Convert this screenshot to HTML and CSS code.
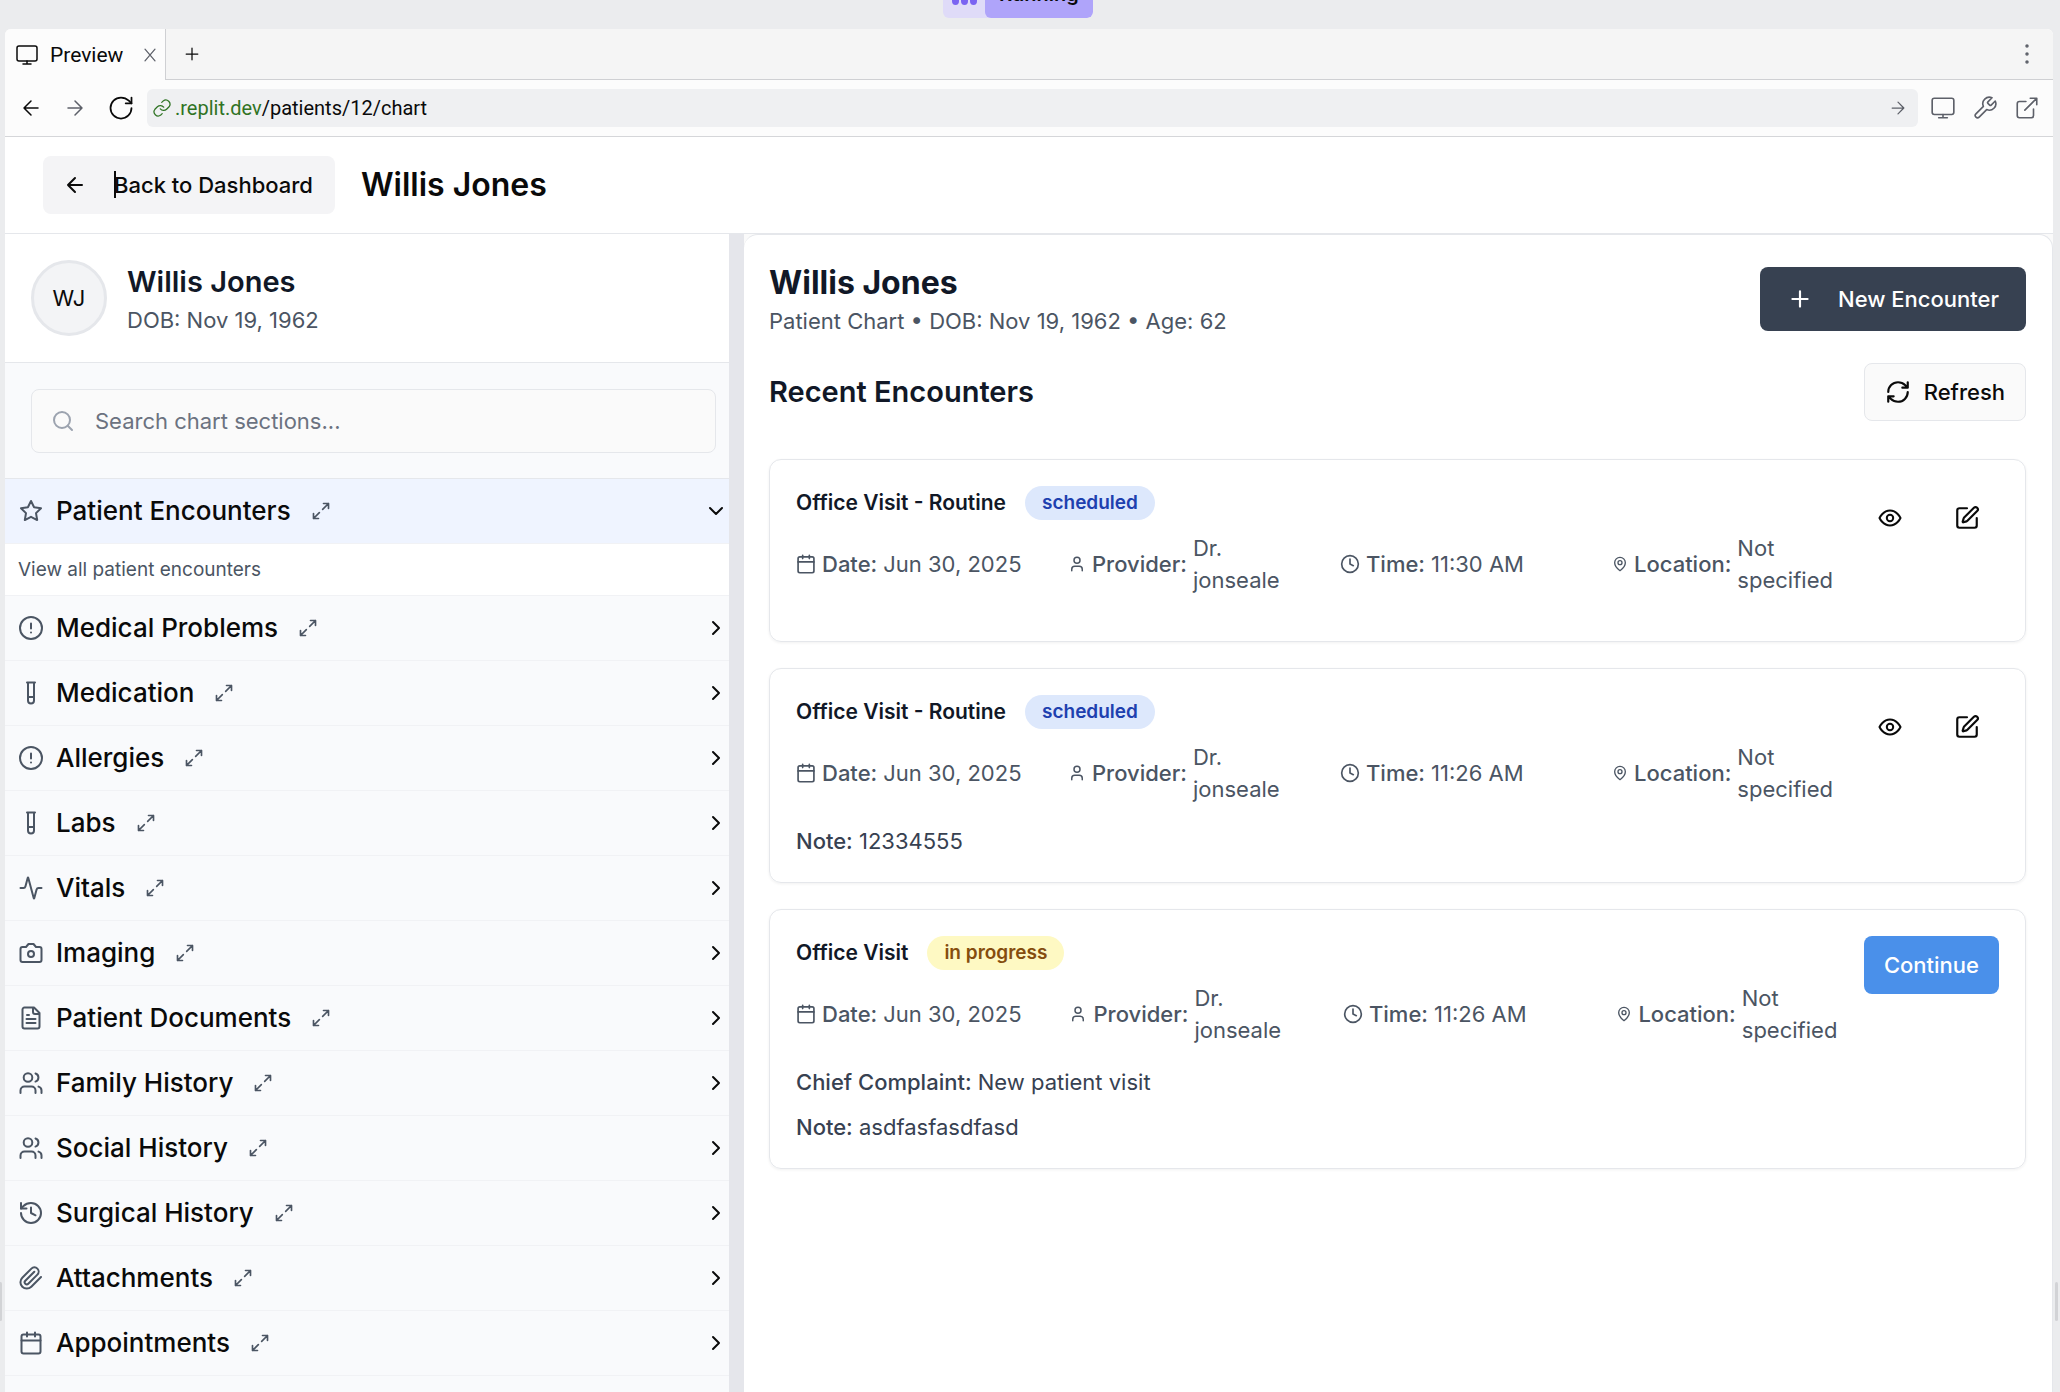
FILE: index.html
```html
<!DOCTYPE html>
<html lang="en">
<head>
<meta charset="utf-8">
<title>Willis Jones – Patient Chart</title>
<link rel="stylesheet" href="styles.css">
</head>
<body>
<svg class="sprite" aria-hidden="true">
  <symbol id="i-monitor" viewBox="0 0 24 24"><rect x="2" y="3" width="20" height="15" rx="2"/><path d="M8 21h8M12 18v3"/></symbol>
  <symbol id="i-x" viewBox="0 0 24 24"><path d="M18 5 6 19M6 5l12 14"/></symbol>
  <symbol id="i-plus" viewBox="0 0 24 24"><path d="M5 12h14M12 5v14"/></symbol>
  <symbol id="i-dots" viewBox="0 0 24 24"><circle cx="12" cy="12" r="1"/><circle cx="12" cy="4" r="1"/><circle cx="12" cy="20" r="1"/></symbol>
  <symbol id="i-left" viewBox="0 0 24 24"><path d="m12 19-7-7 7-7M19 12H5"/></symbol>
  <symbol id="i-right" viewBox="0 0 24 24"><path d="M5 12h14M12 5l7 7-7 7"/></symbol>
  <symbol id="i-reload" viewBox="0 0 24 24"><path d="M21 12a9 9 0 1 1-9-9c2.500 0 4.900 1 6.700 2.700L21 8"/><path d="M21 3v5h-5"/></symbol>
  <symbol id="i-link" viewBox="0 0 24 24"><path d="M10 13a5 5 0 0 0 7.500.5l3-3a5 5 0 0 0-7-7l-1.800 1.700"/><path d="M14 11a5 5 0 0 0-7.500-.5l-3 3a5 5 0 0 0 7 7l1.700-1.700"/></symbol>
  <symbol id="i-wrench" viewBox="0 0 24 24"><path d="M14.700 6.300a1 1 0 0 0 0 1.400l1.600 1.600a1 1 0 0 0 1.400 0l3.770-3.770a6 6 0 0 1-7.940 7.940l-6.910 6.910a2.120 2.120 0 0 1-3-3l6.910-6.910a6 6 0 0 1 7.940-7.940l-3.760 3.760z"/></symbol>
  <symbol id="i-external" viewBox="0 0 24 24"><path d="M15 3h6v6M10 14 21 3M18 13v6a2 2 0 0 1-2 2H5a2 2 0 0 1-2-2V8a2 2 0 0 1 2-2h6"/></symbol>
  <symbol id="i-search" viewBox="0 0 24 24"><circle cx="11" cy="11" r="8"/><path d="m21 21-4.300-4.300"/></symbol>
  <symbol id="i-star" viewBox="0 0 24 24"><path d="M12 2l3.090 6.260L22 9.270l-5 4.870 1.180 6.880L12 17.770l-6.180 3.250L7 14.140 2 9.270l6.910-1.010z"/></symbol>
  <symbol id="i-expand" viewBox="0 0 24 24"><path d="M15 3h6v6M9 21H3v-6M21 3l-7 7M3 21l7-7"/></symbol>
  <symbol id="i-down" viewBox="0 0 24 24"><path d="m6 9 6 6 6-6"/></symbol>
  <symbol id="i-next" viewBox="0 0 24 24"><path d="m9 18 6-6-6-6"/></symbol>
  <symbol id="i-alert" viewBox="0 0 24 24"><circle cx="12" cy="12" r="11"/><path d="M12 7.500v5M12 16.500h.01"/></symbol>
  <symbol id="i-tube" viewBox="0 0 24 24"><path d="M15 1.500v18c0 1.700-1.300 3-3 3s-3-1.300-3-3v-18M8 1.500h8M15 16H9"/></symbol>
  <symbol id="i-pulse" viewBox="0 0 24 24"><path d="M22.500 12h-2.980a2 2 0 0 0-1.930 1.460l-2.350 8.860a.25.25 0 0 1-.48 0L9.240 1.680a.25.25 0 0 0-.48 0l-2.350 8.860A2 2 0 0 1 4.490 12H1.500"/></symbol>
  <symbol id="i-camera" viewBox="0 0 24 24"><path d="M14.500 3h-5L7 6H3.500a2 2 0 0 0-2 2v11a2 2 0 0 0 2 2h17a2 2 0 0 0 2-2V8a2 2 0 0 0-2-2H17z"/><circle cx="12" cy="13" r="3"/></symbol>
  <symbol id="i-file" viewBox="0 0 24 24"><path d="M15 1.500H5.500a2 2 0 0 0-2 2v17a2 2 0 0 0 2 2h13a2 2 0 0 0 2-2V7z"/><path d="M14 2v4a2 2 0 0 0 2 2h4M10 9H8M16.500 13H7.500M16.500 17H7.500"/></symbol>
  <symbol id="i-users" viewBox="0 0 24 24"><path d="M16.500 22v-2.500a4 4 0 0 0-4-4h-7a4 4 0 0 0-4 4V22"/><circle cx="9" cy="6.500" r="4.300"/><path d="M22.500 22v-2.500a4 4 0 0 0-3-3.870M16.500 2.430a4.300 4.300 0 0 1 0 8.150"/></symbol>
  <symbol id="i-history" viewBox="0 0 24 24"><path d="M2 12a10 10 0 1 0 10-10 10.500 10.500 0 0 0-7.500 3L2 7.500"/><path d="M2 2v5.500h5.500M12 6.500V12l4.500 2.300"/></symbol>
  <symbol id="i-clip" viewBox="0 0 24 24"><path d="m22 11-9.700 9.700a6.300 6.300 0 0 1-9-9l9.100-9.100a4.200 4.200 0 0 1 6 6l-9.100 9.100a2.100 2.100 0 0 1-3-3l9-9"/></symbol>
  <symbol id="i-calendar" viewBox="0 0 24 24"><path d="M8 1.500v4M16 1.500v4M2.500 9.500h19"/><rect x="2.500" y="3.500" width="19" height="19" rx="2"/></symbol>
  <symbol id="i-user" viewBox="0 0 24 24"><path d="M19 21v-2a4 4 0 0 0-4-4H9a4 4 0 0 0-4 4v2"/><circle cx="12" cy="7" r="4"/></symbol>
  <symbol id="i-clock" viewBox="0 0 24 24"><circle cx="12" cy="12" r="10"/><path d="M12 6v6l4 2"/></symbol>
  <symbol id="i-pin" viewBox="0 0 24 24"><path d="M20 10c0 6-8 12-8 12s-8-6-8-12a8 8 0 0 1 16 0Z"/><circle cx="12" cy="10" r="3"/></symbol>
  <symbol id="i-eye" viewBox="0 0 24 24"><path d="M1.500 12s3.500-7.500 10.500-7.500S22.500 12 22.500 12s-3.500 7.500-10.500 7.500S1.500 12 1.500 12Z"/><circle cx="12" cy="12" r="3.200"/></symbol>
  <symbol id="i-edit" viewBox="0 0 24 24"><path d="M12 3H5a2 2 0 0 0-2 2v14a2 2 0 0 0 2 2h14a2 2 0 0 0 2-2v-7"/><path d="M18.380 2.620a1 1 0 0 1 3 3l-9.010 9.010a2 2 0 0 1-.85.500l-2.870.840a.5.5 0 0 1-.62-.62l.84-2.870a2 2 0 0 1 .5-.85z"/></symbol>
  <symbol id="i-refresh" viewBox="0 0 24 24"><path d="M3 12a9 9 0 0 1 9-9 9.750 9.750 0 0 1 6.740 2.740L21 8M21 3v5h-5M21 12a9 9 0 0 1-9 9 9.750 9.750 0 0 1-6.740-2.740L3 16M8 16H3v5"/></symbol>
</svg>

<div class="workspace">
  <div class="run-pill"><span class="run-dots"><i></i><i></i><i></i></span><span class="run-label">Running</span></div>
  <span class="handle handle-left"></span>
  <span class="handle handle-right"></span>

  <div class="window">
    <div class="tabs">
      <div class="tab"><svg class="icon s24"><use href="#i-monitor"/></svg><span>Preview</span><button class="plain muted" aria-label="Close tab"><svg class="icon s20"><use href="#i-x"/></svg></button></div>
      <div class="tab-rest">
        <button class="plain" aria-label="New tab"><svg class="icon s20"><use href="#i-plus"/></svg></button>
        <button class="plain muted" aria-label="More"><svg class="icon s24"><use href="#i-dots"/></svg></button>
      </div>
    </div>
    <div class="toolbar">
      <div class="nav-buttons">
        <button class="plain" aria-label="Back"><svg class="icon s24"><use href="#i-left"/></svg></button>
        <button class="plain muted" aria-label="Forward"><svg class="icon s24"><use href="#i-right"/></svg></button>
        <button class="plain" aria-label="Reload"><svg class="icon s28"><use href="#i-reload"/></svg></button>
      </div>
      <div class="address"><svg class="icon s20 green"><use href="#i-link"/></svg><a class="url" href="#"><span class="green">.replit.dev</span>/patients/12/chart</a><button class="plain muted" aria-label="Go"><svg class="icon s20"><use href="#i-right"/></svg></button></div>
      <div class="tools">
        <button class="plain muted" aria-label="Device size"><svg class="icon s26"><use href="#i-monitor"/></svg></button>
        <button class="plain muted" aria-label="Developer tools"><svg class="icon s26"><use href="#i-wrench"/></svg></button>
        <button class="plain muted" aria-label="Open in new window"><svg class="icon s26"><use href="#i-external"/></svg></button>
      </div>
    </div>

    <header class="app-header">
      <button class="btn back"><svg class="icon s24"><use href="#i-left"/></svg><span class="caret-text">Back to Dashboard</span></button>
      <h1>Willis Jones</h1>
    </header>

    <div class="panes">
      <aside class="sidebar">
        <div class="patient">
          <div class="avatar">WJ</div>
          <div><h2>Willis Jones</h2><p>DOB: Nov 19, 1962</p></div>
        </div>
        <div class="search-area">
          <label class="search"><svg class="icon s24"><use href="#i-search"/></svg><input type="text" placeholder="Search chart sections..." aria-label="Search chart sections"></label>
        </div>
        <nav class="sections">
          <button class="section active"><svg class="icon s24"><use href="#i-star"/></svg><span>Patient Encounters</span><svg class="icon s20 expand"><use href="#i-expand"/></svg><svg class="icon s24 chevron"><use href="#i-down"/></svg></button>
          <p class="section-note">View all patient encounters</p>
          <button class="section"><svg class="icon s24"><use href="#i-alert"/></svg><span>Medical Problems</span><svg class="icon s20 expand"><use href="#i-expand"/></svg><svg class="icon s24 chevron"><use href="#i-next"/></svg></button>
          <button class="section"><svg class="icon s24"><use href="#i-tube"/></svg><span>Medication</span><svg class="icon s20 expand"><use href="#i-expand"/></svg><svg class="icon s24 chevron"><use href="#i-next"/></svg></button>
          <button class="section"><svg class="icon s24"><use href="#i-alert"/></svg><span>Allergies</span><svg class="icon s20 expand"><use href="#i-expand"/></svg><svg class="icon s24 chevron"><use href="#i-next"/></svg></button>
          <button class="section"><svg class="icon s24"><use href="#i-tube"/></svg><span>Labs</span><svg class="icon s20 expand"><use href="#i-expand"/></svg><svg class="icon s24 chevron"><use href="#i-next"/></svg></button>
          <button class="section"><svg class="icon s24"><use href="#i-pulse"/></svg><span>Vitals</span><svg class="icon s20 expand"><use href="#i-expand"/></svg><svg class="icon s24 chevron"><use href="#i-next"/></svg></button>
          <button class="section"><svg class="icon s24"><use href="#i-camera"/></svg><span>Imaging</span><svg class="icon s20 expand"><use href="#i-expand"/></svg><svg class="icon s24 chevron"><use href="#i-next"/></svg></button>
          <button class="section"><svg class="icon s24"><use href="#i-file"/></svg><span>Patient Documents</span><svg class="icon s20 expand"><use href="#i-expand"/></svg><svg class="icon s24 chevron"><use href="#i-next"/></svg></button>
          <button class="section"><svg class="icon s24"><use href="#i-users"/></svg><span>Family History</span><svg class="icon s20 expand"><use href="#i-expand"/></svg><svg class="icon s24 chevron"><use href="#i-next"/></svg></button>
          <button class="section"><svg class="icon s24"><use href="#i-users"/></svg><span>Social History</span><svg class="icon s20 expand"><use href="#i-expand"/></svg><svg class="icon s24 chevron"><use href="#i-next"/></svg></button>
          <button class="section"><svg class="icon s24"><use href="#i-history"/></svg><span>Surgical History</span><svg class="icon s20 expand"><use href="#i-expand"/></svg><svg class="icon s24 chevron"><use href="#i-next"/></svg></button>
          <button class="section"><svg class="icon s24"><use href="#i-clip"/></svg><span>Attachments</span><svg class="icon s20 expand"><use href="#i-expand"/></svg><svg class="icon s24 chevron"><use href="#i-next"/></svg></button>
          <button class="section"><svg class="icon s24"><use href="#i-calendar"/></svg><span>Appointments</span><svg class="icon s20 expand"><use href="#i-expand"/></svg><svg class="icon s24 chevron"><use href="#i-next"/></svg></button>
        </nav>
      </aside>

      <div class="content-wrap">
      <main class="content">
        <div class="chart-head">
          <div><h2>Willis Jones</h2><p>Patient Chart • DOB: Nov 19, 1962 • Age: 62</p></div>
          <button class="btn primary"><svg class="icon s26"><use href="#i-plus"/></svg>New Encounter</button>
        </div>
        <div class="list-head">
          <h3>Recent Encounters</h3>
          <button class="btn outline"><svg class="icon s26"><use href="#i-refresh"/></svg>Refresh</button>
        </div>
        <div class="cards">
          <article class="card">
            <div class="card-body">
              <div class="card-title"><h4>Office Visit - Routine</h4><span class="badge blue">scheduled</span></div>
              <div class="meta">
                <div><svg class="icon s20"><use href="#i-calendar"/></svg><b>Date:</b><span>Jun 30, 2025</span></div>
                <div><svg class="icon s18"><use href="#i-user"/></svg><b>Provider:</b><span>Dr. jonseale</span></div>
                <div><svg class="icon s20"><use href="#i-clock"/></svg><b>Time:</b><span>11:30 AM</span></div>
                <div><svg class="icon s16"><use href="#i-pin"/></svg><b>Location:</b><span>Not specified</span></div>
              </div>
              <div class="notes"></div>
            </div>
            <div class="actions">
              <button class="plain" aria-label="View encounter"><svg class="icon s24"><use href="#i-eye"/></svg></button>
              <button class="plain" aria-label="Edit encounter"><svg class="icon s26"><use href="#i-edit"/></svg></button>
            </div>
          </article>
          <article class="card">
            <div class="card-body">
              <div class="card-title"><h4>Office Visit - Routine</h4><span class="badge blue">scheduled</span></div>
              <div class="meta">
                <div><svg class="icon s20"><use href="#i-calendar"/></svg><b>Date:</b><span>Jun 30, 2025</span></div>
                <div><svg class="icon s18"><use href="#i-user"/></svg><b>Provider:</b><span>Dr. jonseale</span></div>
                <div><svg class="icon s20"><use href="#i-clock"/></svg><b>Time:</b><span>11:26 AM</span></div>
                <div><svg class="icon s16"><use href="#i-pin"/></svg><b>Location:</b><span>Not specified</span></div>
              </div>
              <div class="notes"><p><b>Note:</b> 12334555</p></div>
            </div>
            <div class="actions">
              <button class="plain" aria-label="View encounter"><svg class="icon s24"><use href="#i-eye"/></svg></button>
              <button class="plain" aria-label="Edit encounter"><svg class="icon s26"><use href="#i-edit"/></svg></button>
            </div>
          </article>
          <article class="card">
            <div class="card-body">
              <div class="card-title"><h4>Office Visit</h4><span class="badge yellow">in progress</span></div>
              <div class="meta">
                <div><svg class="icon s20"><use href="#i-calendar"/></svg><b>Date:</b><span>Jun 30, 2025</span></div>
                <div><svg class="icon s18"><use href="#i-user"/></svg><b>Provider:</b><span>Dr. jonseale</span></div>
                <div><svg class="icon s20"><use href="#i-clock"/></svg><b>Time:</b><span>11:26 AM</span></div>
                <div><svg class="icon s16"><use href="#i-pin"/></svg><b>Location:</b><span>Not specified</span></div>
              </div>
              <div class="notes"><p><b>Chief Complaint:</b> New patient visit</p><p><b>Note:</b> asdfasfasdfasd</p></div>
            </div>
            <div class="actions"><button class="btn continue">Continue</button></div>
          </article>
        </div>
      </main>
      </div>
    </div>
  </div>
</div>
</body>
</html>
```

FILE: styles.css
```css
*, *::before, *::after { box-sizing: border-box; }
body, h1, h2, h3, h4, p { margin: 0; }
body { font: 22px/32px Inter, sans-serif; color: #0a0a0a; }
button { font: inherit; color: inherit; border: 0; background: none; padding: 0; cursor: pointer; }
b { font-weight: 500; }

.sprite { display: none; }
.icon { flex: none; display: block; fill: none; stroke: currentColor; stroke-width: 2; stroke-linecap: round; stroke-linejoin: round; }
.s16 { width: 16px; height: 16px; }
.s18 { width: 18px; height: 18px; }
.s20 { width: 20px; height: 20px; }
.s24 { width: 24px; height: 24px; }
.s26 { width: 26px; height: 26px; }
.s28 { width: 28px; height: 28px; }
.plain { display: flex; align-items: center; justify-content: center; }
.muted { color: #5d6069; }
.green { color: #2f7324; }

.workspace { position: relative; height: 100vh; overflow: hidden; background: #ebecee; padding: 29px 7px 0 5px; }
.run-pill { position: absolute; left: 943px; bottom: calc(100% - 18px); display: flex; background: #dfdbf8; border-radius: 6px; overflow: hidden; color: #0a0a0a; }
.run-dots { display: flex; gap: 2px; align-items: flex-end; width: 42px; padding: 0 8px 13px 9px; }
.run-dots i { width: 7px; height: 8px; border-radius: 50%; background: #7a63f2; }
.run-label { background: #afa4fa; border-radius: 6px; padding: 0 14px; height: 38px; line-height: 28px; font-size: 20px; font-weight: 600; }
.handle { position: absolute; top: 1282px; width: 3px; height: 39px; border-radius: 2px; background: #d2d3d6; }
.handle-left { left: -1px; }
.handle-right { right: 2px; }

.window { display: flex; flex-direction: column; height: 100%; background: #fff; border-radius: 6px 6px 0 0; overflow: hidden; }
.tabs, .toolbar { font-family: Roboto, sans-serif; font-size: 20px; }
.tabs .icon, .toolbar .icon { stroke-width: 1.5; }
.tabs { display: flex; height: 51px; background: #f5f5f5; font-size: 21px; }
.tab { display: flex; align-items: center; gap: 11px; padding: 0 5px 0 10px; width: 161px; border-right: 1px solid #cfd0d3; background: #fcfcfc; }
.tab .plain { margin-left: auto; }
.tab-rest { flex: 1; display: flex; align-items: center; justify-content: space-between; padding: 0 14px 0 16px; border-bottom: 1px solid #cfd0d3; }
.toolbar { display: flex; align-items: center; gap: 12px; height: 57px; padding: 0 13px 0 14px; background: #fcfcfc; border-bottom: 1px solid #d5d6d9; }
.nav-buttons { display: flex; align-items: center; gap: 20px; }
.address { flex: 1; display: flex; align-items: center; height: 38px; padding: 0 10px 0 5px; border-radius: 6px; background: #eff0f2; }
.url { flex: 1; color: #0a0a0a; text-decoration: none; padding-left: 3px; }
.tools { display: flex; align-items: center; gap: 16px; }

.app-header { display: flex; align-items: center; gap: 26px; height: 97px; padding: 0 38px; border-bottom: 1px solid #e5e7eb; }
.btn { display: flex; align-items: center; border-radius: 8px; font-weight: 500; }
.back { gap: 27px; height: 58px; padding: 0 22px 0 20px; background: #f4f4f6; }
.caret-text { position: relative; }
.caret-text::before { content: ""; position: absolute; left: 0; top: 2px; width: 2px; height: 27px; background: #0a0a0a; }
h1 { font-size: 32px; line-height: 42px; font-weight: 600; }

.panes { flex: 1; min-height: 0; display: flex; }
.sidebar { width: 739px; flex: none; background: #f9fafc; border-right: 15px solid #e5e6eb; }
.patient { display: flex; align-items: center; gap: 20px; height: 129px; padding: 0 26px; background: #fff; border-bottom: 1px solid #e5e7eb; }
.avatar { display: flex; align-items: center; justify-content: center; width: 76px; height: 76px; border: 3px solid #e5e7eb; border-radius: 50%; background: #f3f4f6; }
.patient h2, .list-head h3 { font-size: 29px; line-height: 44px; font-weight: 600; color: #111827; }
.patient p, .chart-head p { color: #4b5563; }
.search-area { height: 116px; padding: 26px 13px 26px 26px; border-bottom: 1px solid #e5e7eb; }
.search { display: flex; align-items: center; gap: 20px; height: 64px; padding: 0 19px; border: 1px solid #e5e7eb; border-radius: 8px; background: #fafafa; color: #9ca3af; }
.search input { flex: 1; min-width: 0; border: 0; outline: 0; padding: 0; background: none; font: inherit; color: #111827; }
.search input::placeholder { color: #6b7280; opacity: 1; }
.section { display: flex; align-items: center; width: 100%; height: 65px; padding: 0 1px 0 14px; border-bottom: 1px solid #f1f2f5; font-size: 26px; font-weight: 500; text-align: left; }
.section .icon { color: #4b5563; }
.section span { margin: 0 20px 0 13px; }
.section .icon.chevron { margin-left: auto; color: #0a0a0a; }
.section.active { background: #eff4ff; }
.section-note { height: 52px; padding: 0 13px; background: #fff; border-bottom: 1px solid #f1f2f5; color: #4b5563; font-size: 19px; line-height: 52px; }

.content-wrap { flex: 1; min-width: 0; background: #fafafa; }
.content { height: 100%; padding: 25px 26px 0 25px; border: 1px solid #e5e7eb; border-left: 0; border-bottom: 0; border-radius: 14px 14px 0 0; background: #fff; }
.chart-head, .list-head { display: flex; align-items: center; justify-content: space-between; }
.chart-head { height: 77px; }
.chart-head h2 { font-size: 32px; line-height: 45px; font-weight: 700; color: #111827; }
.primary { gap: 25px; height: 64px; padding: 0 27px; background: #374151; color: #fff; }
.list-head { margin: 26px 0 38px; height: 58px; }
.outline { gap: 13px; height: 58px; padding: 0 20px; border: 1px solid #e5e7eb; background: #fafafa; }
.cards { display: flex; flex-direction: column; gap: 26px; }
.card { display: flex; padding: 26px 26px 25px; border: 1px solid #e5e7eb; border-radius: 12px; box-shadow: 0 1px 3px rgba(0, 0, 0, .06); }
.card-body { flex: 1; min-width: 0; }
.card-title { display: flex; align-items: center; gap: 19px; height: 34px; margin-bottom: 12px; }
h4 { font-size: 21px; font-weight: 600; color: #111827; }
.badge { padding: 0 17px; border-radius: 17px; font-size: 19px; line-height: 34px; font-weight: 600; }
.blue { background: #dde8fc; color: #1e40af; }
.yellow { background: #fef9c3; color: #854d0e; }
.meta { display: grid; grid-template-columns: repeat(4, 1fr); gap: 26px; color: #4b5563; }
.meta div { display: flex; align-items: center; gap: 6px; min-height: 64px; padding-right: 6px; }
.notes { display: flex; flex-direction: column; gap: 13px; margin-top: 20px; color: #374151; }
.actions { display: flex; align-items: flex-start; gap: 13px; }
.actions .plain { width: 64px; height: 63px; }
.continue { height: 58px; padding: 0 20px; background: #4a90ea; color: #fff; }
```
